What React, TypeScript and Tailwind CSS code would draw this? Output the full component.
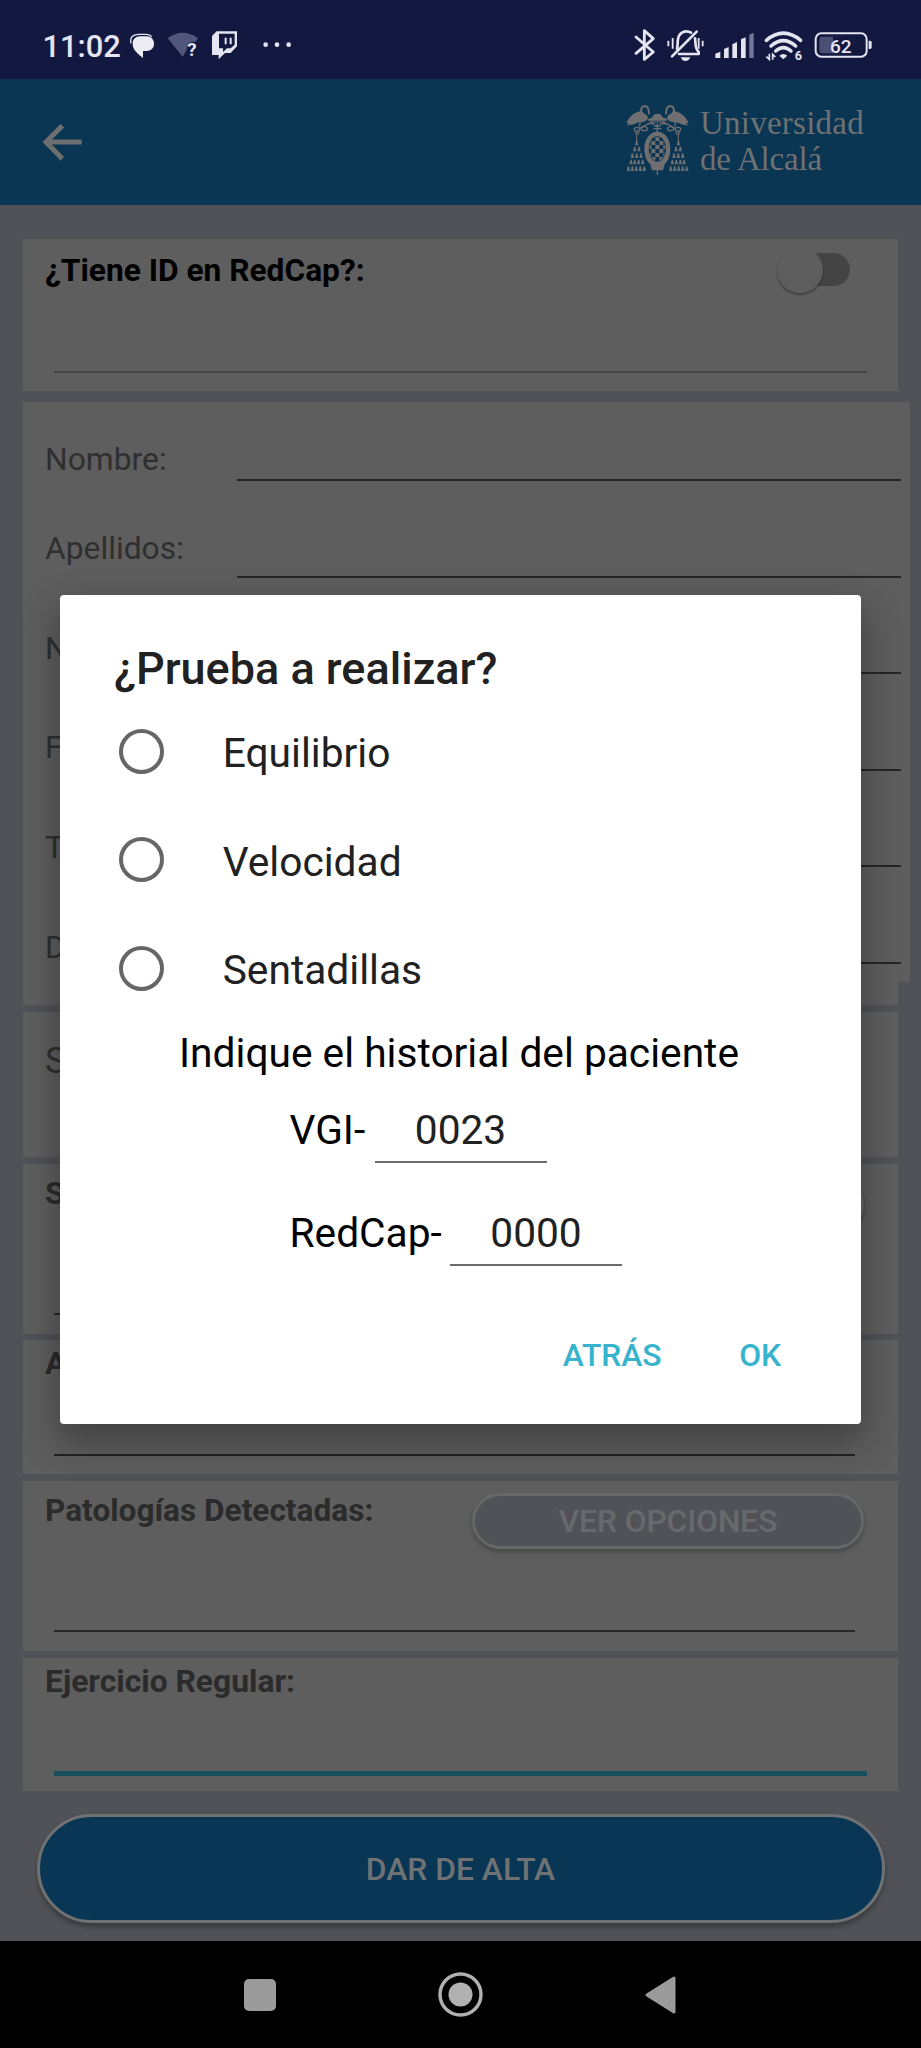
import type { ReactNode } from "react";

/* Drawings of the bars share one grid: three units to a pixel. */
function Glyph({ x, w, h = 237, y = 0, children }: { x: number; w: number; h?: number; y?: number; children: ReactNode }) {
  return (
    <svg width={w / 3} height={h / 3} viewBox={`${x} ${y} ${w} ${h}`} className="block shrink-0" fill="none">
      {children}
    </svg>
  );
}

function StatusBar() {
  return (
    <div className="flex h-[79px] items-start bg-[#131840] pl-[42.5px] pr-[47.7px] text-[#e4e5f0]">
      <span className="w-[87px] shrink-0 pt-[7px] text-[30.9px] leading-[79px] font-medium">11:02</span>
      <Glyph x={388} w={110}>
        <path d="M391 130C387 112 396 104 412 103H436C445 103 450 106 453 110" stroke="#e4e5f0" strokeWidth="4" />
        <path d="M418 109H438C452 109 460 119 460 131C460 144 451 152 438 153H427L427 174C410 160 396 149 396 131C396 118 405 109 418 109Z" fill="#ebecf4" />
      </Glyph>
      <Glyph x={498} w={132}>
        <path d="M503 115Q548 82 594 115L586 126Q560 122 560 150L548 170Z" fill="#53567b" />
        <text x="562" y="167" fontSize="56" fontWeight="700" fill="#e4e5f0" className="font-['Roboto']">?</text>
      </Glyph>
      <Glyph x={630} w={150}>
        <path fillRule="evenodd" d="M650 94H711V139L692 159H675L656 178V165H636V108ZM657 101V145H669V156L681 145H692L704 134V101Z" fill="#e4e5f0" />
        <path d="M677 113V133M692 113V133" stroke="#e4e5f0" strokeWidth="6" />
      </Glyph>
      <Glyph x={780} w={100}>
        <circle cx="797" cy="134" r="7" fill="#e4e5f0" />
        <circle cx="831" cy="134" r="7" fill="#e4e5f0" />
        <circle cx="866" cy="134" r="7" fill="#e4e5f0" />
      </Glyph>
      <div className="ml-auto flex">
        <Glyph x={100} w={90}>
          <path d="M109 111L161 156L134 178V92L161 116L109 160" stroke="#e4e5f0" strokeWidth="8.5" strokeLinejoin="round" strokeLinecap="round" />
        </Glyph>
        <Glyph x={190} w={150}>
          <path d="M232 146C236 136 231 118 239 106Q247 94 260 94Q268 94 274 98M286 115C289 128 284 143 297 156V162H238" stroke="#e4e5f0" strokeWidth="8" strokeLinecap="round" strokeLinejoin="round" />
          <path d="M217 169L291 95" stroke="#e4e5f0" strokeWidth="8" strokeLinecap="round" />
          <path d="M243 172H272Q268 183 257 183Q247 183 243 172Z" fill="#e4e5f0" />
          <path d="M206 122V139M219 114V146M297 114V146M309 122V139" stroke="#e4e5f0" strokeWidth="5.5" />
        </Glyph>
        <Glyph x={340} w={150}>
          <path d="M347 174V161L362 155V174ZM373 174V147L387 141V174ZM398 174V133L412 126V174ZM424 174V118L438 112V174Z" fill="#e4e5f0" />
          <path d="M449 174V104L462 98V174Z" fill="#73759a" />
        </Glyph>
        <Glyph x={490} w={150}>
          <path d="M500 121Q551 78 603 121M514 138Q551 106 588 138M528 153Q551 133 574 153" stroke="#e4e5f0" strokeWidth="10.5" strokeLinecap="round" />
          <path d="M539 167Q551 157 563 167L551 178Z" fill="#e4e5f0" />
          <path d="M509 161V178L500 170M519 179V163L527 171" stroke="#e4e5f0" strokeWidth="5" />
          <text x="585" y="180" fontSize="38" fontWeight="700" fill="#e4e5f0" className="font-['Roboto']">6</text>
        </Glyph>
        <Glyph x={640} w={180}>
          <rect x="648" y="100" width="153" height="70" rx="17" stroke="#e4e5f0" strokeWidth="6" />
          <path d="M668 110H735V160H668Q659 160 659 151V119Q659 110 668 110Z" fill="#4c4f75" />
          <path d="M700 110H736V160H700Z" fill="#131840" />
          <path d="M807 122H811Q816 122 816 127V142Q816 147 811 147H807Z" fill="#e4e5f0" />
          <text x="691" y="158" fontSize="57" fontWeight="500" fill="#e4e5f0" className="font-['Roboto']">62</text>
        </Glyph>
      </div>
    </div>
  );
}

const TASSELS = [
  [110, 190], [104, 208], [117, 208], [97, 228], [110, 228], [123, 228],
  [93, 247], [104, 247], [116, 247], [128, 247],
  [85, 267], [97, 267], [109, 267], [121, 267], [133, 267],
];

const CHECKS = [
  [166, 172], [154, 184], [178, 184], [166, 196], [142, 196], [190, 196], [154, 208], [178, 208],
  [166, 220], [142, 220], [190, 220], [154, 232], [178, 232], [166, 244],
];

function CrestSide() {
  return (
    <g>
      <path d="M79 130C88 112 100 98 122 95C129 98 134 103 140 107C146 113 144 120 138 123C130 129 118 125 108 131C100 136 90 135 79 137L88 130Z" fill="#6f6f70" />
      <path d="M133 112C120 100 120 80 134 79C143 79 147 87 147 104" stroke="#6f6f70" strokeWidth="6" />
      <path d="M121 126L118 140M160 124L118 147M165 134C150 128 140 134 128 142" stroke="#6f6f70" strokeWidth="4" />
      <ellipse cx="111" cy="149" rx="8" ry="6" stroke="#6f6f70" strokeWidth="4" />
      <ellipse cx="133" cy="147" rx="9" ry="6" stroke="#6f6f70" strokeWidth="4" />
      <path d="M110 155V184" stroke="#6f6f70" strokeWidth="3" />
      <circle cx="112" cy="160" r="5" stroke="#6f6f70" strokeWidth="3" />
      {TASSELS.map(([x, y]) => (
        <path key={`${x}-${y}`} d={`M${x - 2} ${y - 7}H${x + 2}L${x + 5} ${y + 7}H${x - 5}Z`} fill="#6f6f70" />
      ))}
    </g>
  );
}

function Crest() {
  return (
    <Glyph x={75} w={195} y={70} h={222}>
      <CrestSide />
      <g transform="translate(345 0) scale(-1 1)">
        <CrestSide />
      </g>
      <path d="M158 113Q159 102 172 102Q186 102 187 113L201 118V123H144V118Z" fill="#6f6f70" />
      <path d="M150 127H195" stroke="#6f6f70" strokeWidth="3" />
      <path d="M172 132V160M163 139H182M160 147H185" stroke="#6f6f70" strokeWidth="4" />
      <path d="M172 156C197 156 211 180 211 207C211 232 202 246 194 254L189 272H156L151 254C142 246 133 232 133 207C133 180 148 156 172 156Z" fill="#6f6f70" />
      <ellipse cx="172" cy="208" rx="26" ry="38" fill="#0b3553" />
      <clipPath id="shield"><ellipse cx="172" cy="208" rx="24" ry="36" /></clipPath>
      <g clipPath="url(#shield)" fill="#6f6f70">
        {CHECKS.map(([x, y]) => <rect key={`${x}-${y}`} x={x} y={y} width="12" height="12" />)}
      </g>
      <path d="M172 272V286" stroke="#6f6f70" strokeWidth="4" />
    </Glyph>
  );
}

function Header() {
  return (
    <header className="flex h-[126px] items-start bg-[#0a3553] pl-[40px] pr-[57px]">
      <div className="pt-[41px]">
        <Glyph x={120} w={135} y={360} h={135}>
          <path d="M245 426H142M187 377L138 426L187 476" stroke="#6c6f70" strokeWidth="15" />
        </Glyph>
      </div>
      <div className="ml-auto flex pt-[24.3px]">
        <Crest />
        <div className="ml-[10px] pt-[2px] font-['Liberation_Serif'] text-[33px] leading-[36px] text-[#6f7172]">
          <div className="tracking-[0.25px]">Universidad</div>
          <div className="tracking-[-0.2px]">de Alcalá</div>
        </div>
      </div>
    </header>
  );
}

function Card({ className, children }: { className: string; children?: ReactNode }) {
  return <section className={`ml-[23px] w-[875px] bg-[#5e5e5e] ${className}`}>{children}</section>;
}

function OptionsButton() {
  return (
    <button className="mt-[12px] h-[56px] w-[392px] rounded-full border-[3.5px] border-[#666868] bg-[#515257] text-[31.6px] leading-[49px] font-medium text-[#68696d] shadow-[0_3px_4px_rgba(0,0,0,0.25)]">
      VER OPCIONES
    </button>
  );
}

function OptionsCard({ label, className }: { label: string; className: string }) {
  return (
    <Card className={`h-[170px] ${className}`}>
      <div className="flex h-[149px] items-start justify-between pl-[22px] pr-[34px]">
        <h2 className="pt-[8px] text-[31.6px] leading-[44px] font-bold text-[#2b2b2b]">{label}</h2>
        <OptionsButton />
      </div>
      <div className="ml-[31px] h-[2px] w-[801px] bg-[#282828]" />
    </Card>
  );
}

const FIELDS = ["Nombre:", "Apellidos:", "NHC:", "Fecha:", "Teléfono:", "Dirección:"];

function PersonalData() {
  return (
    <>
      <section className="mt-[11px] ml-[23px] flex h-[580px] w-[887px] bg-[#5e5e5e]">
        <div className="w-[191px] pt-[35px] pl-[22px] text-[31.8px] leading-[44px] text-[#2f2f2f]">
          {FIELDS.map((f, i) => (
            <div key={f} className={i === 0 ? "h-[89px]" : "h-[99.7px]"}>{f}</div>
          ))}
        </div>
        <div className="ml-[23px] w-[664px]">
          {FIELDS.map((f, i) => (
            <div key={f} className={`border-b-2 border-[#262626] ${i === 0 ? "h-[79px]" : "h-[96.6px]"}`} />
          ))}
        </div>
      </section>
      <Card className="h-[22.5px]" />
    </>
  );
}

function Dialog() {
  return (
    <div
      role="dialog"
      className="absolute top-[595px] left-[60px] h-[829px] w-[801px] rounded-[4px] bg-white text-[40.7px] leading-[52px] text-[#212121] shadow-[0_16px_36px_4px_rgba(0,0,0,0.3)]"
    >
      <h1 className="box-content h-[58px] pt-[44px] pl-[54px] text-[45px] leading-[60px] font-medium">¿Prueba a realizar?</h1>
      {["Equilibrio", "Velocidad", "Sentadillas"].map((option) => (
        <label key={option} className="flex h-[108.6px] items-center pl-[58.7px]">
          <span className="size-[45px] rounded-full border-4 border-[#666666]" />
          <span className="pt-[4px] pl-[59px]">{option}</span>
        </label>
      ))}
      <p className="mt-[4px] pl-[119px] text-black">Indique el historial del paciente</p>
      <div className="mt-[25.6px] flex h-[58.7px] pl-[229.5px]">
        <span className="w-[76px] text-black">VGI-</span>
        <span className="ml-[9px] w-[172px] border-b-2 border-[#6b6b6b] text-center">0023</span>
      </div>
      <div className="mt-[44px] flex h-[58.7px] pl-[229.5px]">
        <span className="w-[152px] text-black">RedCap-</span>
        <span className="ml-[8.5px] w-[172px] border-b-2 border-[#6b6b6b] text-center">0000</span>
      </div>
      <div className="mt-[69px] flex justify-end gap-[77.6px] pr-[79.8px] text-[31.8px] leading-[40px] font-medium text-[#37b3cd]">
        <button>ATRÁS</button>
        <button>OK</button>
      </div>
    </div>
  );
}

function NavigationBar() {
  return (
    <nav className="flex h-[107px] items-center justify-between bg-black pr-[244px] pl-[244px]">
      <span className="size-[32px] rounded-[5px] bg-[#9b9b9b]" />
      <svg width="45" height="45" viewBox="0 0 45 45" fill="none">
        <circle cx="22.5" cy="22.5" r="20.5" stroke="#b1b1b1" strokeWidth="3.4" />
        <circle cx="22.5" cy="22.5" r="12" fill="#b1b1b1" />
      </svg>
      <svg width="32" height="38" viewBox="0 0 32 38">
        <path d="M2 19L29 2V36Z" fill="#9b9b9b" stroke="#9b9b9b" strokeWidth="3" strokeLinejoin="round" />
      </svg>
    </nav>
  );
}

export default function App() {
  return (
    <div className="relative h-[2048px] w-[921px] overflow-hidden bg-[#515257] font-['Roboto',sans-serif]">
      <StatusBar />
      <Header />
      <main className="h-[1736px]">
        <div className="h-[34px]" />
        <Card className="h-[152px]">
          <div className="flex h-[61px] items-center pl-[22px]">
            <h2 className="pt-[3px] text-[31.7px] leading-[44px] font-bold text-black">¿Tiene ID en RedCap?:</h2>
            <div className="mr-[48px] ml-auto flex items-center">
              <span className="z-10 -mr-[20px] size-[46px] rounded-full bg-[#5e5e5e] shadow-[0_2px_2px_rgba(0,0,0,0.3)]" />
              <span className="h-[32.5px] w-[47px] rounded-r-full bg-[#444444]" />
            </div>
          </div>
          <div className="mt-[71px] ml-[31px] h-[2px] w-[813px] bg-[#454545]" />
        </Card>
        <PersonalData />
        <Card className="mt-[7.5px] h-[145px]">
          <div className="pt-[23px] pl-[22px] text-[36px] leading-[52px] text-[#2f2f2f]">Sexo:</div>
        </Card>
        <OptionsCard label="Síntomas:" className="mt-[7px]" />
        <Card className="mt-[6px] h-[134px]">
          <h2 className="h-[114px] pt-px pl-[22px] text-[31.8px] leading-[44px] font-bold text-[#2b2b2b]">Alergias:</h2>
          <div className="ml-[31px] h-[2px] w-[801px] bg-[#222222]" />
        </Card>
        <OptionsCard label="Patologías Detectadas:" className="mt-[7px]" />
        <Card className="mt-[6.5px] h-[133.5px]">
          <h2 className="h-[113px] pt-px pl-[22px] text-[31.8px] leading-[44px] font-bold text-[#2b2b2b]">Ejercicio Regular:</h2>
          <div className="ml-[31px] h-[5px] w-[813px] bg-[#184f5b]" />
        </Card>
        <button className="mt-[23px] ml-[36.5px] block h-[109px] w-[848px] rounded-full border-[3.5px] border-[#6f7172] bg-[#0a3655] pt-[2px] text-[31.8px] font-medium text-[#6e7274] shadow-[0_4px_5px_rgba(0,0,0,0.3)]">
          DAR DE ALTA
        </button>
      </main>
      <NavigationBar />
      <Dialog />
    </div>
  );
}
